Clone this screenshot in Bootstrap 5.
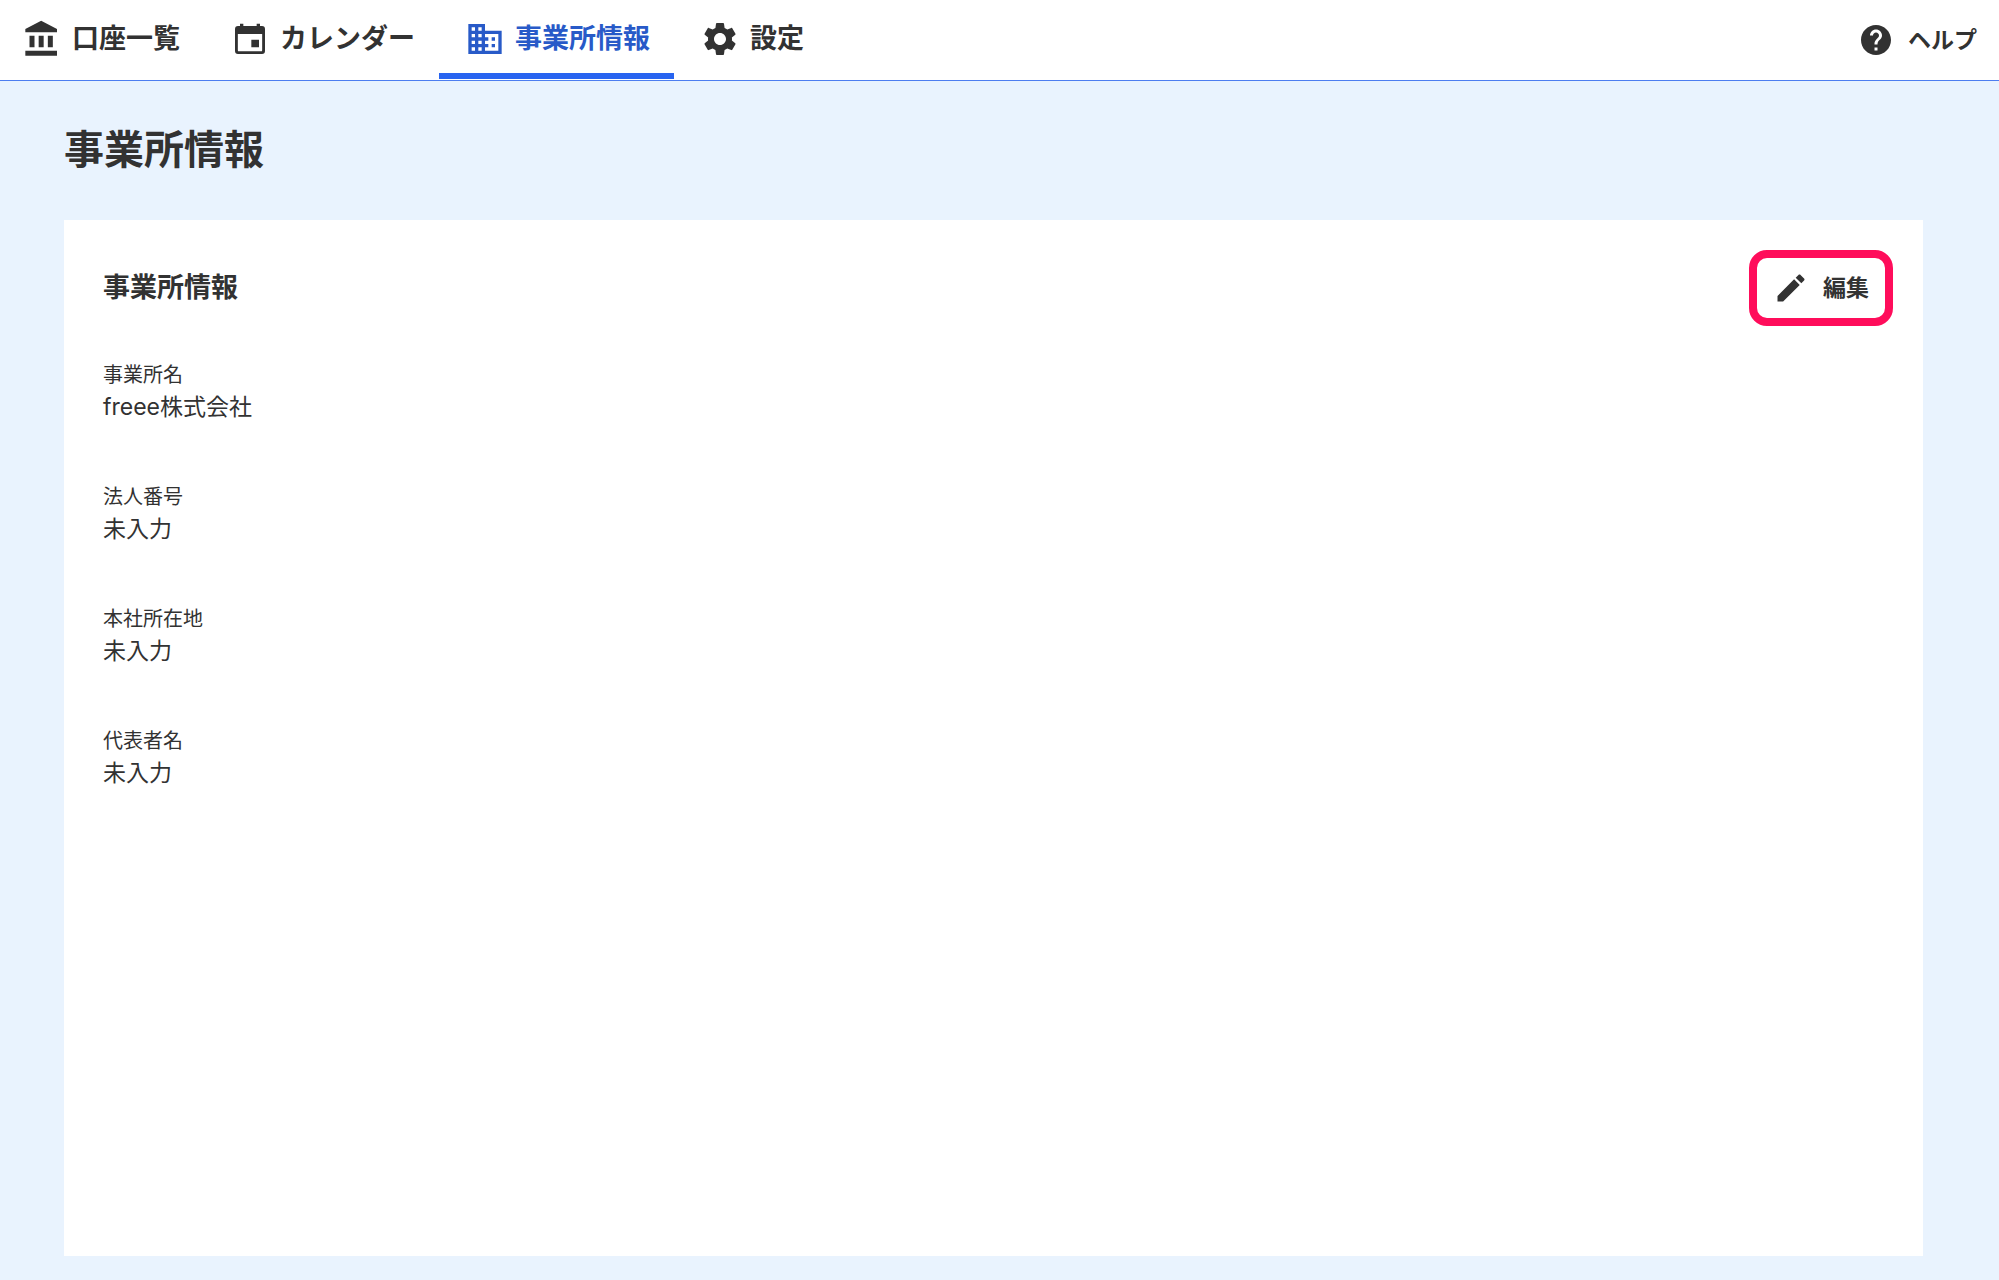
<!DOCTYPE html>
<html lang="ja">
<head>
<meta charset="utf-8">
<meta name="viewport" content="width=device-width, initial-scale=1">
<title>事業所情報</title>
<link href="https://cdn.jsdelivr.net/npm/bootstrap@5.3.0/dist/css/bootstrap.min.css" rel="stylesheet">
<style>
  body { background: #e9f3fe; color: #323232; font-family: Inter, "Noto Sans CJK JP", sans-serif; }
  svg { fill: currentColor; flex: none; }
  .site-header { background: #fff; border-bottom: 1px solid #4d7df0; height: 81px; }
  .main-tabs .nav-link { color: #323232; font-size: 27px; font-weight: 700; line-height: 40px; padding: 19px 24px 14px 26px; gap: 10px; border-bottom: 6px solid transparent; }
  .main-tabs .nav-item:first-child .nav-link { padding-left: 22px; }
  .main-tabs .nav-link.active { color: #285ac8; border-bottom-color: #2864f0; }
  .help-link { color: #323232; font-size: 23px; font-weight: 700; gap: 14px; padding-right: 22px; }
  .page-body { padding: 39px 76px 24px 64px; }
  .page-title { font-size: 40px; font-weight: 700; line-height: 60px; margin-bottom: 40px; }
  .office-panel { background: #fff; padding: 30px 30px 40px 39px; }
  .panel-title { font-size: 27px; font-weight: 700; line-height: 40px; }
  .edit-btn, .edit-btn:hover { color: #323232; background: #fff; border: 8px solid #ff0d5b; border-radius: 18px; font-size: 23px; font-weight: 700; line-height: 36px; gap: 14px; padding: 12px 16px; }
  .field-list { margin-top: 34px; }
  .field-list dt { font-size: 20px; font-weight: 400; line-height: 30px; }
  .field-list dd { font-size: 23px; line-height: 34px; margin-bottom: 58px; }
</style>
<script defer src="https://cdn.jsdelivr.net/npm/bootstrap@5.3.0/dist/js/bootstrap.bundle.min.js"></script>
</head>
<body class="d-flex flex-column min-vh-100">
<header class="site-header d-flex justify-content-between align-items-start">
  <nav aria-label="メイン">
    <ul class="nav main-tabs flex-nowrap">
      <li class="nav-item"><a class="nav-link d-flex align-items-center" href="#">
        <svg width="40" height="40" viewBox="0 0 24 24" aria-hidden="true"><path d="M4.5 10v7h3v-7h-3zm5.5 0v7h3v-7h-3zM2 22h19v-3H2v3zm13.500-12v7h3v-7h-3zM11.500 1 2 6v2h19V6l-9.500-5z"/></svg>
        口座一覧</a></li>
      <li class="nav-item"><a class="nav-link d-flex align-items-center" href="#">
        <svg width="40" height="40" viewBox="0 0 24 24" aria-hidden="true"><path fill-rule="evenodd" d="M6 2.800h2v1.400h8V2.800h2v1.400h1.200a1.800 1.800 0 0 1 1.800 1.800v13.200a1.800 1.800 0 0 1-1.800 1.800H4.800A1.800 1.800 0 0 1 3 19.200V6a1.800 1.800 0 0 1 1.800-1.800H6zM4.700 9v9.700a.7.7 0 0 0 .7.7h13.200a.7.7 0 0 0 .7-.7V9zM12.800 12.400h4.600V17h-4.600z"/></svg>
        カレンダー</a></li>
      <li class="nav-item"><a class="nav-link active d-flex align-items-center" aria-current="page" href="#">
        <svg width="40" height="40" viewBox="0 0 24 24" aria-hidden="true"><path d="M12 7V3H2v18h20V7H12zM6 19H4v-2h2v2zm0-4H4v-2h2v2zm0-4H4V9h2v2zm0-4H4V5h2v2zm4 12H8v-2h2v2zm0-4H8v-2h2v2zm0-4H8V9h2v2zm0-4H8V5h2v2zm10 12h-8v-2h2v-2h-2v-2h2v-2h-2V9h8v10zm-2-8h-2v2h2v-2zm0 4h-2v2h2v-2z"/></svg>
        事業所情報</a></li>
      <li class="nav-item"><a class="nav-link d-flex align-items-center" href="#">
        <svg width="40" height="40" viewBox="0 0 24 24" aria-hidden="true"><path d="M19.140 12.940c.04-.3.06-.61.06-.94 0-.32-.02-.64-.07-.94l2.030-1.580c.18-.14.23-.41.12-.61l-1.920-3.320c-.12-.22-.37-.29-.59-.22l-2.390.96c-.5-.38-1.030-.7-1.620-.94l-.36-2.540c-.04-.24-.24-.41-.48-.41h-3.840c-.24 0-.43.17-.47.41l-.36 2.540c-.59.24-1.130.57-1.620.94l-2.390-.96c-.22-.08-.47 0-.59.22L2.740 8.870c-.12.21-.08.47.12.61l2.030 1.580c-.05.3-.09.63-.09.94s.02.64.07.94l-2.030 1.580c-.18.14-.23.41-.12.61l1.920 3.320c.12.22.37.29.59.22l2.390-.96c.5.38 1.030.7 1.620.94l.36 2.540c.05.24.24.41.48.41h3.840c.24 0 .44-.17.47-.41l.36-2.540c.59-.24 1.130-.56 1.620-.94l2.390.96c.22.08.47 0 .59-.22l1.920-3.320c.12-.22.07-.47-.12-.61l-2.010-1.580zM12 15.600c-1.980 0-3.600-1.620-3.600-3.600s1.620-3.600 3.600-3.600 3.600 1.620 3.600 3.600-1.620 3.600-3.600 3.600z"/></svg>
        設定</a></li>
    </ul>
  </nav>
  <a class="help-link d-flex align-items-center h-100 text-decoration-none" href="#">
    <svg width="36" height="36" viewBox="0 0 24 24" aria-hidden="true"><path d="M12 2C6.480 2 2 6.480 2 12s4.480 10 10 10 10-4.480 10-10S17.520 2 12 2zm1 17h-2v-2h2v2zm2.070-7.750-.9.920C13.450 12.900 13 13.500 13 15h-2v-.5c0-1.100.45-2.100 1.170-2.830l1.240-1.260c.37-.36.59-.86.59-1.410 0-1.100-.9-2-2-2s-2 .9-2 2H8c0-2.210 1.790-4 4-4s4 1.790 4 4c0 .88-.36 1.680-.93 2.250z"/></svg>
    ヘルプ</a>
</header>
<main class="page-body d-flex flex-column flex-grow-1">
  <h1 class="page-title">事業所情報</h1>
  <section class="office-panel flex-grow-1" aria-labelledby="office-heading">
    <div class="d-flex justify-content-between align-items-center">
      <h2 class="panel-title mb-0" id="office-heading">事業所情報</h2>
      <button type="button" class="btn edit-btn d-flex align-items-center">
        <svg width="36" height="36" viewBox="0 0 24 24" aria-hidden="true"><path d="M3 17.250V21h3.750L17.810 9.940l-3.750-3.750L3 17.250zM20.710 7.040c.39-.39.39-1.020 0-1.410l-2.340-2.340c-.39-.39-1.020-.39-1.410 0l-1.830 1.830 3.750 3.750 1.830-1.830z"/></svg>
        編集</button>
    </div>
    <dl class="field-list mb-0">
      <dt>事業所名</dt><dd>freee株式会社</dd>
      <dt>法人番号</dt><dd>未入力</dd>
      <dt>本社所在地</dt><dd>未入力</dd>
      <dt>代表者名</dt><dd class="mb-0">未入力</dd>
    </dl>
  </section>
</main>
</body>
</html>
